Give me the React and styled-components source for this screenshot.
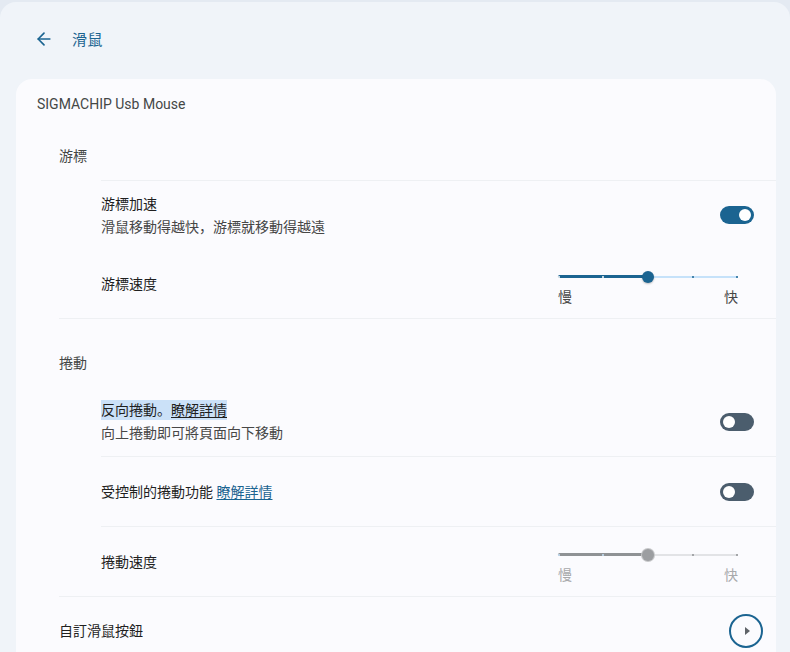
import React from 'react';
import styled, { createGlobalStyle } from 'styled-components';
import { ArrowLeft } from 'lucide-react';

const GlobalStyle = createGlobalStyle`
  html, body {
    margin: 0;
    padding: 0;
    background: #e4eaf2;
    font-family: Roboto, "Noto Sans CJK JP", sans-serif;
    color: #1f1f1f;
  }
  * { box-sizing: border-box; }
`

const Window = styled.div`
  margin-top: 2px;
  height: 650px;
  overflow: hidden;
  background: #f0f4f9;
  border-radius: 16px 16px 0 0;
`

const Header = styled.div`
  height: 77px;
  display: flex;
  align-items: center;
  padding: 0 0 4px 34px;
  color: #1b6491;
`

const Title = styled.h1`
  margin: 0 0 0 18px;
  font-size: 15px;
  font-weight: 400;
  color: #1b6491;
  letter-spacing: 0.5px;
`

const Card = styled.div`
  margin: 0 14px 0 16px;
  background: #fbfbfe;
  border-radius: 16px 16px 0 0;
  min-height: 580px;
`

const DeviceName = styled.div`
  padding: 15px 21px 13px;
  font-size: 14px;
  line-height: 20px;
  color: #444746;
`

const SectionTitle = styled.div`
  padding: ${p => p.$top}px 43px 14px;
  font-size: 14px;
  line-height: 20px;
  color: #444746;
`

const Divider = styled.div`
  height: 1px;
  background: #eef0f3;
  margin-left: ${p => p.$indent}px;
`

const Row = styled.div`
  display: flex;
  align-items: center;
  justify-content: space-between;
  height: ${p => p.$h || 68}px;
  padding-left: ${p => p.$indent || 85}px;
  padding-right: ${p => p.$right || 22}px;
`

const Texts = styled.div`
  display: flex;
  flex-direction: column;
  gap: 1px;
`

const Label = styled.div`
  font-size: 14px;
  line-height: 22px;
  color: #1f1f1f;
`

const Sub = styled.div`
  font-size: 14px;
  line-height: 22px;
  color: #474747;
`

const Selected = styled.span`
  background: #cbe1f8;
  padding: 2px 0;
`

const Link = styled.a`
  color: ${p => (p.$plain ? '#1f1f1f' : '#1b6491')};
  text-decoration: underline;
  text-underline-offset: 2px;
  cursor: pointer;
`

const Track = styled.div`
  position: relative;
  width: 34px;
  height: 18px;
  border-radius: 9px;
  background: ${p => (p.$on ? '#1b6491' : '#4b5d6d')};
`

const Knob = styled.div`
  position: absolute;
  top: 3px;
  left: ${p => (p.$on ? '19px' : '3px')};
  width: 12px;
  height: 12px;
  border-radius: 50%;
  background: #fff;
`

const Toggle = ({ on }) => (
  <Track $on={on}>
    <Knob $on={on} />
  </Track>
);

const SliderWrap = styled.div`
  width: 180px;
  margin-right: 16px;
  margin-top: 9px;
`

const SliderBar = styled.div`
  position: relative;
  height: 14px;
`

const Rail = styled.div`
  position: absolute;
  top: 6px;
  left: 0;
  right: 0;
  height: 2px;
  background: ${p => (p.$disabled ? '#e2e3e6' : '#c6e2fa')};
`

const Fill = styled.div`
  position: absolute;
  top: 5px;
  left: 0;
  width: 90px;
  height: 3px;
  border-radius: 2px;
  background: ${p => (p.$disabled ? '#8f9295' : '#1b6491')};
`

const Tick = styled.div`
  position: absolute;
  top: 6px;
  width: 2px;
  height: 2px;
  border-radius: 50%;
  background: ${p => p.$c};
`

const Thumb = styled.div`
  position: absolute;
  top: 1px;
  left: 84px;
  width: 12px;
  height: 12px;
  border-radius: 50%;
  background: ${p => (p.$disabled ? '#9c9ea1' : '#1b6491')};
  box-shadow: ${p => (p.$disabled ? '0 0 0 1px #c7c8ca' : '0 1px 2px rgba(0,0,0,0.25)')};
`

const Ends = styled.div`
  display: flex;
  justify-content: space-between;
  margin-top: 3px;
  font-size: 14px;
  line-height: 20px;
  color: ${p => (p.$disabled ? '#a8a9ab' : '#474747')};
`

const Slider = ({ disabled }) => {
  const onFill = disabled ? '#c6e2fa' : '#ffffff';
  const onRail = disabled ? '#8f9295' : '#1b6491';
  return (
    <SliderWrap>
      <SliderBar>
        <Rail $disabled={disabled} />
        <Fill $disabled={disabled} />
        <Tick $c={onFill} style={{ left: 0 }} />
        <Tick $c={onFill} style={{ left: 44 }} />
        <Tick $c={onRail} style={{ left: 134 }} />
        <Tick $c={onRail} style={{ left: 178 }} />
        <Thumb $disabled={disabled} />
      </SliderBar>
      <Ends $disabled={disabled}>
        <span>慢</span>
        <span>快</span>
      </Ends>
    </SliderWrap>
  );
};

const CircleButton = styled.div`
  width: 34px;
  height: 34px;
  border-radius: 50%;
  border: 2px solid #1b6491;
  display: flex;
  align-items: center;
  justify-content: center;
`

const Arrow = styled.div`
  width: 0;
  height: 0;
  margin-left: 2px;
  border-top: 4px solid transparent;
  border-bottom: 4px solid transparent;
  border-left: 5px solid #5f6368;
`

export default function App() {
  return (
    <>
      <GlobalStyle />
      <Window>
        <Header>
          <ArrowLeft size={20} strokeWidth={2} />
          <Title>滑鼠</Title>
        </Header>
        <Card>
          <DeviceName>SIGMACHIP Usb Mouse</DeviceName>

          <SectionTitle $top={19}>游標</SectionTitle>
          <Divider $indent={85} />
          <Row $h={68}>
            <Texts>
              <Label>游標加速</Label>
              <Sub>滑鼠移動得越快，游標就移動得越遠</Sub>
            </Texts>
            <Toggle on />
          </Row>
          <Row $h={69}>
            <Label>游標速度</Label>
            <Slider />
          </Row>
          <Divider $indent={43} />

          <SectionTitle $top={34}>捲動</SectionTitle>
          <Row $h={69}>
            <Texts>
              <Label>
                <Selected>
                  反向捲動。<Link $plain>瞭解詳情</Link>
                </Selected>
              </Label>
              <Sub>向上捲動即可將頁面向下移動</Sub>
            </Texts>
            <Toggle />
          </Row>
          <Divider $indent={85} />
          <Row $h={69}>
            <Label>
              受控制的捲動功能 <Link>瞭解詳情</Link>
            </Label>
            <Toggle />
          </Row>
          <Divider $indent={85} />
          <Row $h={69}>
            <Label>捲動速度</Label>
            <Slider disabled />
          </Row>
          <Divider $indent={43} />
          <Row $h={68} $indent={43} $right={13}>
            <Label>自訂滑鼠按鈕</Label>
            <CircleButton>
              <Arrow />
            </CircleButton>
          </Row>
        </Card>
      </Window>
    </>
  );
}
